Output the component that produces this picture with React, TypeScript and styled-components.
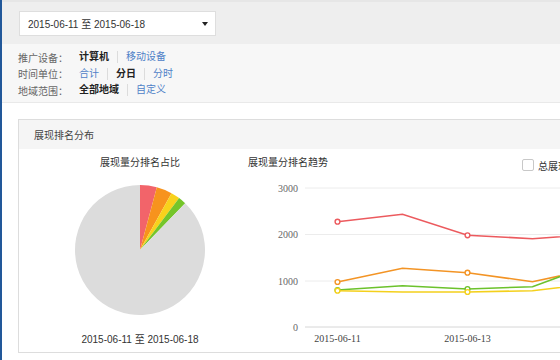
import React from "react";
import styled, { createGlobalStyle } from "styled-components";

const GlobalStyle = createGlobalStyle`
  html, body {
    margin: 0;
    padding: 0;
    background: #fff;
    overflow: hidden;
  }
  body {
    font-family: "Liberation Sans", "Noto Sans CJK SC", sans-serif;
    font-size: 10px;
    color: #333;
  }
`;

const Page = styled.div`
  width: 900px;
  height: 360px;
  border-left: 2px solid #22589a;
  box-sizing: border-box;
`;

const TopBar = styled.div`
  height: 44px;
  background: #eeeeee;
  border-top: 2px solid #e6e6e6;
  box-sizing: border-box;
  padding: 9px 0 0 17px;
`;

const DateSelect = styled.div`
  width: 197px;
  height: 25px;
  box-sizing: border-box;
  background: #fff;
  border: 1px solid #dedede;
  display: flex;
  align-items: center;
  justify-content: space-between;
  padding: 0 7px 0 8px;
  font-size: 10px;
  color: #333;
`;

const Caret = styled.span`
  width: 0;
  height: 0;
  border-left: 3px solid transparent;
  border-right: 3px solid transparent;
  border-top: 4px solid #222;
`;

const Filters = styled.div`
  background: #f7f7f7;
  border-bottom: 1px solid #e9e9e9;
  padding: 5px 0 3px 16px;
`;

const FilterRow = styled.div`
  display: flex;
  align-items: center;
  height: 16.5px;
`;

const FilterLabel = styled.span`
  width: 61px;
  color: #666;
`;

const Option = styled.span<{ active?: boolean; first?: boolean }>`
  padding: 0 8px;
  line-height: 12px;
  border-left: ${({ first }) => (first ? "none" : "1px solid #dcdcdc")};
  padding-left: ${({ first }) => (first ? "0" : "8px")};
  color: ${({ active }) => (active ? "#222" : "#4f81c7")};
  font-weight: ${({ active }) => (active ? "bold" : "normal")};
`;

const Panel = styled.div`
  margin: 16px 0 0 16px;
  height: 234px;
  box-sizing: border-box;
  border: 1px solid #dddddd;
`;

const PanelHeader = styled.div`
  height: 29px;
  background: #f5f5f5;
  display: flex;
  align-items: center;
  padding-left: 15px;
  color: #444;
`;

const PanelBody = styled.div`
  display: flex;
`;

const PieColumn = styled.div`
  width: 202px;
  padding-left: 20px;
  display: flex;
  flex-direction: column;
  align-items: center;
`;

const ChartTitle = styled.div`
  margin-top: 6px;
  line-height: 16px;
  color: #333;
`;

const PieSvg = styled.svg`
  margin-top: 14px;
  display: block;
`;

const PieDate = styled.div`
  margin-top: 17px;
  line-height: 16px;
  color: #333;
`;

const TrendColumn = styled.div`
  flex: 1;
  padding-left: 7px;
`;

const TrendHeader = styled.div`
  display: flex;
  align-items: flex-start;
`;

const Legend = styled.div`
  margin: 9px 0 0 194px;
  display: flex;
  align-items: center;
  gap: 4px;
  color: #333;
  white-space: nowrap;
`;

const Checkbox = styled.span`
  width: 10px;
  height: 10px;
  border: 1px solid #c8c8c8;
  border-radius: 2px;
  background: #fff;
`;

const TrendSvg = styled.svg`
  display: block;
  margin-top: 3px;
  font-family: "Liberation Serif", serif;
  font-size: 10px;
`;

const slices = [
  { value: 15, color: "#f2646a" },
  { value: 14, color: "#f7931d" },
  { value: 8, color: "#f8d21c" },
  { value: 7, color: "#74c52a" },
  { value: 316, color: "#dcdcdc" },
];

function arcPath(cx: number, cy: number, r: number, a0: number, a1: number) {
  const rad = (d: number) => (d * Math.PI) / 180;
  const x0 = cx + r * Math.sin(rad(a0));
  const y0 = cy - r * Math.cos(rad(a0));
  const x1 = cx + r * Math.sin(rad(a1));
  const y1 = cy - r * Math.cos(rad(a1));
  const large = a1 - a0 > 180 ? 1 : 0;
  return `M${cx},${cy} L${x0},${y0} A${r},${r} 0 ${large} 1 ${x1},${y1} Z`;
}

function Pie() {
  let start = 0;
  return (
    <PieSvg width={130} height={130} viewBox="0 0 130 130">
      {slices.map((s, i) => {
        const d = arcPath(65, 65, 65, start, start + s.value);
        start += s.value;
        return <path key={i} d={d} fill={s.color} />;
      })}
    </PieSvg>
  );
}

const yTicks = [
  { label: "3000", y: 12 },
  { label: "2000", y: 58.5 },
  { label: "1000", y: 105 },
  { label: "0", y: 151 },
];

const xs = [89.5, 154.5, 219.5, 284.5, 349.5, 414.5, 479.5, 544.5];
const dates = ["2015-06-11", "", "2015-06-13"];

const series = [
  { color: "#ec5a5e", ys: [45.7, 38.3, 59.3, 62.7, 58, 55, 60, 57] },
  { color: "#f39425", ys: [106, 92.3, 96.7, 105.7, 92, 96, 100, 95] },
  { color: "#6cc22c", ys: [114, 109.7, 113, 110.7, 87, 92, 98, 94] },
  { color: "#f4d01c", ys: [114.7, 116, 116, 114.7, 107, 109, 110, 108] },
];

function Trend() {
  return (
    <TrendSvg width={640} height={172}>
      {yTicks.map((t) => (
        <g key={t.label}>
          <line
            x1={57}
            x2={640}
            y1={t.y}
            y2={t.y}
            stroke={t.label === "0" ? "#d6d6d6" : "#ececec"}
            strokeWidth={1}
          />
          <text x={50} y={t.y + 3.5} textAnchor="end" fill="#666">
            {t.label}
          </text>
        </g>
      ))}
      {dates.map((d, i) =>
        d ? (
          <text key={i} x={xs[i]} y={166} textAnchor="middle" fill="#444">
            {d}
          </text>
        ) : null
      )}
      {series.map((s) => (
        <g key={s.color}>
          <polyline
            points={s.ys.map((y, i) => `${xs[i]},${y}`).join(" ")}
            fill="none"
            stroke={s.color}
            strokeWidth={1.6}
          />
          {s.ys.map((y, i) =>
            i % 2 === 0 ? (
              <circle
                key={i}
                cx={xs[i]}
                cy={y}
                r={2.4}
                fill="#fff"
                stroke={s.color}
                strokeWidth={1.4}
              />
            ) : null
          )}
        </g>
      ))}
    </TrendSvg>
  );
}

export default function App() {
  return (
    <Page>
      <GlobalStyle />
      <TopBar>
        <DateSelect>
          <span>2015-06-11 至 2015-06-18</span>
          <Caret />
        </DateSelect>
      </TopBar>
      <Filters>
        <FilterRow>
          <FilterLabel>推广设备：</FilterLabel>
          <Option first active>计算机</Option>
          <Option>移动设备</Option>
        </FilterRow>
        <FilterRow>
          <FilterLabel>时间单位：</FilterLabel>
          <Option first>合计</Option>
          <Option active>分日</Option>
          <Option>分时</Option>
        </FilterRow>
        <FilterRow>
          <FilterLabel>地域范围：</FilterLabel>
          <Option first active>全部地域</Option>
          <Option>自定义</Option>
        </FilterRow>
      </Filters>
      <Panel>
        <PanelHeader>展现排名分布</PanelHeader>
        <PanelBody>
          <PieColumn>
            <ChartTitle>展现量分排名占比</ChartTitle>
            <Pie />
            <PieDate>2015-06-11 至 2015-06-18</PieDate>
          </PieColumn>
          <TrendColumn>
            <TrendHeader>
              <ChartTitle>展现量分排名趋势</ChartTitle>
              <Legend>
                <Checkbox />
                <span>总展现量</span>
              </Legend>
            </TrendHeader>
            <Trend />
          </TrendColumn>
        </PanelBody>
      </Panel>
    </Page>
  );
}
